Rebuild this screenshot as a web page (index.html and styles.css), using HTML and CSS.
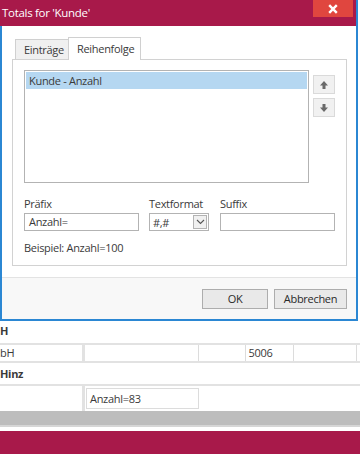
FILE: index.html
```html
<!DOCTYPE html>
<html>
<head>
<meta charset="utf-8">
<link rel="stylesheet" href="styles.css">
</head>
<body>
<div class="dialog">
  <div class="titlebar">
    <span class="title">Totals for 'Kunde'</span>
    <div class="close">
      <svg width="10" height="10" viewBox="0 0 10 10"><path d="M1.2 1.2 L8.8 8.8 M8.8 1.2 L1.2 8.8" stroke="#fff" stroke-width="2.4" fill="none"/></svg>
    </div>
  </div>
  <div class="dlg-body">
    <div class="tabs">
      <div class="tab">Einträge</div>
      <div class="tab active">Reihenfolge</div>
    </div>
    <div class="panel">
      <div class="list-row">
        <div class="listbox">
          <div class="item selected">Kunde - Anzahl</div>
        </div>
        <div class="movers">
          <div class="mover">
            <svg width="10" height="10" viewBox="0 0 10 10"><path d="M5 1 L9 5.5 L6.5 5.5 L6.5 9 L3.5 9 L3.5 5.5 L1 5.5 Z" fill="#6a6a6a"/></svg>
          </div>
          <div class="mover">
            <svg width="10" height="10" viewBox="0 0 10 10"><path d="M5 9 L9 4.5 L6.5 4.5 L6.5 1 L3.5 1 L3.5 4.5 L1 4.5 Z" fill="#6a6a6a"/></svg>
          </div>
        </div>
      </div>
      <div class="fields">
        <div class="field wide">
          <div class="label">Präfix</div>
          <div class="input">Anzahl=</div>
        </div>
        <div class="field narrow">
          <div class="label">Textformat</div>
          <div class="select">
            <span>#,#</span>
            <span class="drop">
              <svg width="9" height="6" viewBox="0 0 9 6"><path d="M1 1 L4.5 4.5 L8 1" stroke="#555" stroke-width="1.1" fill="none"/></svg>
            </span>
          </div>
        </div>
        <div class="field wide">
          <div class="label">Suffix</div>
          <div class="input"></div>
        </div>
      </div>
      <div class="example">Beispiel: Anzahl=100</div>
    </div>
    <div class="footer">
      <div class="btn ok">OK</div>
      <div class="btn cancel">Abbrechen</div>
    </div>
  </div>
</div>

<div class="grid">
  <div class="group">H</div>
  <div class="sep"></div>
  <div class="row data">
    <div class="cell c1">bH</div>
    <div class="cell c2"></div>
    <div class="cell c3"></div>
    <div class="cell c4">5006</div>
    <div class="cell c5"></div>
    <div class="cell c6"></div>
  </div>
  <div class="sep"></div>
  <div class="group g2">Hinz</div>
  <div class="sep"></div>
  <div class="row total">
    <div class="cell c1"></div>
    <div class="totalbox">Anzahl=83</div>
  </div>
  <div class="hscroll"></div>
  <div class="gap"></div>
  <div class="bottombar"></div>
</div>
</body>
</html>
```

FILE: styles.css
```css
* { box-sizing: border-box; }
html, body { margin: 0; padding: 0; }
body {
  width: 360px;
  height: 454px;
  overflow: hidden;
  background: #fff;
  font-family: "Open Sans", "Noto Sans", "Liberation Sans", sans-serif;
  font-size: 11px;
  letter-spacing: -0.3px;
  color: #3a3a3a;
}

.dialog {
  width: 358px;
  border-right: 2px solid #2b87d3;
  background: #fff;
}

.titlebar {
  height: 26px;
  background: #a8194a;
  display: flex;
  justify-content: space-between;
  align-items: flex-start;
}
.title {
  color: #fff;
  padding: 6px 0 0 2px;
  font-size: 11.5px;
  line-height: 14px;
}
.close {
  width: 40px;
  height: 17px;
  margin-right: 3px;
  background: #e0463f;
  display: flex;
  align-items: center;
  justify-content: center;
}

.dlg-body {
  height: 295px;
  border-left: 2px solid #2b87d3;
  border-bottom: 2px solid #2b87d3;
  display: flex;
  flex-direction: column;
  padding-top: 11px;
}

.tabs {
  height: 22px;
  display: flex;
  align-items: flex-end;
  padding-left: 13px;
}
.tab {
  height: 20px;
  border: 1px solid #d0d0d0;
  border-bottom: none;
  background: #f0f0f0;
  line-height: 19px;
  width: 54px;
  padding-left: 8px;
}
.tab.active {
  position: relative;
  z-index: 1;
  height: 23px;
  margin-bottom: -1px;
  background: #fff;
  width: 73px;
  line-height: 22px;
  margin-left: -1px;
}

.panel {
  margin-left: 10px;
  width: 335px;
  height: 207px;
  border: 1px solid #d2d2d2;
  padding: 10px 0 0 11px;
}

.list-row {
  display: flex;
  gap: 4px;
}
.listbox {
  width: 285px;
  height: 113px;
  border: 1px solid #b3b3b3;
  padding: 1px;
}
.item {
  height: 17px;
  line-height: 17px;
  padding-left: 3px;
}
.item.selected { background: #b5d7f1; }

.movers {
  display: flex;
  flex-direction: column;
  gap: 4px;
  margin-top: 5px;
}
.mover {
  width: 22px;
  height: 19px;
  border: 1px solid #dadada;
  background: #f1f1f1;
  display: flex;
  align-items: center;
  justify-content: center;
}

.fields {
  display: flex;
  margin-top: 14px;
}
.field { display: flex; flex-direction: column; gap: 2px; }
.field.wide { width: 115px; }
.field.narrow { width: 60px; margin: 0 11px 0 10px; }
.label { height: 14px; line-height: 14px; }
.input {
  height: 18px;
  border: 1px solid #b3b3b3;
  padding-left: 4px;
  line-height: 16px;
}
.select {
  height: 18px;
  border: 1px solid #b3b3b3;
  padding: 0 1px 0 3px;
  display: flex;
  justify-content: space-between;
  align-items: center;
}
.drop {
  width: 14px;
  height: 14px;
  border: 1px solid #b3b3b3;
  background: #f0f0f0;
  display: flex;
  align-items: center;
  justify-content: center;
}
.example {
  margin-top: 10px;
  height: 14px;
  line-height: 14px;
}

.footer {
  margin-top: 11px;
  flex: 1;
  border-top: 1px solid #e3e3e3;
  background: #f8f8f8;
  display: flex;
  justify-content: flex-end;
  gap: 6px;
  padding: 11px 9px 0 0;
}
.btn {
  height: 20px;
  border: 1px solid #adadad;
  background: #e9e9e9;
  line-height: 18px;
  text-align: center;
  color: #2a2a2a;
}
.btn.ok { width: 66px; }
.btn.cancel { width: 73px; }

.grid { width: 360px; }
.group {
  height: 22px;
  line-height: 20px;
  font-weight: bold;
}
.group.g2 { height: 21px; line-height: 21px; }
.sep { height: 2px; background: #e2e2e2; }
.row { display: flex; }
.row.data { height: 16px; }
.row.total { height: 25px; align-items: flex-start; }
.cell {
  height: 100%;
  border-right: 1px solid #dcdcdc;
  line-height: 16px;
  padding-left: 3px;
}
.cell.c1 { width: 85px; border-right: 3px solid #e2e2e2; padding-left: 0; }
.cell.c2 { width: 115px; }
.cell.c3 { width: 47px; }
.cell.c4 { width: 49px; }
.cell.c5 { width: 63px; }
.cell.c6 { flex: 1; border-right: none; }
.totalbox {
  margin: 2px 0 0 1px;
  width: 113px;
  height: 21px;
  border: 1px solid #dcdcdc;
  line-height: 19px;
  padding-left: 3px;
}
.hscroll {
  height: 16px;
  background: #bdbdbd;
  border-bottom: 2px solid #d6d6d6;
}
.gap { height: 4px; }
.bottombar { height: 23px; background: #a8194a; }
```
